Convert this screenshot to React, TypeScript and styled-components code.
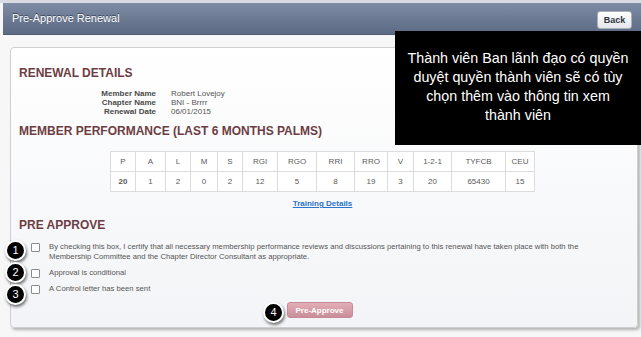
import React from 'react';
import styled, { createGlobalStyle } from 'styled-components';

const GlobalStyle = createGlobalStyle`
  html, body {
    margin: 0;
    padding: 0;
    background: #f7f7f8;
    font-family: 'Liberation Sans', Arial, sans-serif;
  }
`;

const Page = styled.div`
  position: relative;
  width: 641px;
  height: 337px;
  overflow: hidden;
  background: #f7f7f8;
`;

const TopStrip = styled.div`
  height: 3px;
  background: #d9dde3;
`;

const HeaderBar = styled.div`
  height: 31px;
  margin-left: 3px;
  display: flex;
  align-items: center;
  justify-content: space-between;
  padding: 0 9px 0 9px;
  background: linear-gradient(#7f8ca5, #6a7892 55%, #5d6a84);
  border-bottom: 1px solid #4f5b73;
`;

const Title = styled.div`
  color: #fff;
  font-size: 11px;
  text-shadow: 0 -1px 0 #3d475a;
  margin-top: -2px;
`;

const BackButton = styled.button`
  width: 35px;
  height: 18px;
  padding: 0;
  border: 1px solid #a9b0bb;
  border-radius: 3px;
  background: linear-gradient(#ffffff, #e4e6ea);
  color: #2f3440;
  font-family: inherit;
  font-size: 9px;
  font-weight: bold;
  margin-top: 2px;
`;

const Body = styled.div`
  padding: 12px 3px 0 10px;
`;

const Card = styled.div`
  height: 281px;
  box-sizing: border-box;
  border: 1px solid #cfcfd2;
  border-radius: 4px;
  background: linear-gradient(#ffffff, #f3f4f7);
  box-shadow: 2px 2px 3px rgba(0, 0, 0, 0.28);
  padding: 18px 11px 0 8px;
  display: flex;
  flex-direction: column;
`;

const SectionTitle = styled.div<{ $gap?: number }>`
  color: #6d3d44;
  font-size: 12px;
  line-height: 14px;
  font-weight: bold;
  margin-top: ${(p) => p.$gap ?? 0}px;
`;

const DetailGrid = styled.div`
  display: grid;
  grid-template-columns: 70px auto;
  column-gap: 15px;
  margin: 9px 0 0 67px;
  font-size: 8px;
  line-height: 9px;
`;

const DetailLabel = styled.div`
  text-align: right;
  font-weight: bold;
  color: #4a4a4a;
`;

const DetailValue = styled.div`
  color: #555;
`;

const StatsTable = styled.table`
  border-collapse: collapse;
  margin: 13px auto 0;
  table-layout: fixed;
  background: #fff;
`;

const Cell = styled.td<{ $w: number; $bold?: boolean }>`
  width: ${(p) => p.$w}px;
  height: 19px;
  padding: 0;
  border: 1px solid #dcdcdc;
  text-align: center;
  font-family: 'Liberation Sans', Arial, sans-serif;
  font-size: 8px;
  color: #5a5a5a;
  font-weight: ${(p) => (p.$bold ? 'bold' : 'normal')};
`;

const TrainingLink = styled.a`
  align-self: center;
  margin-top: 7px;
  font-size: 8px;
  line-height: 10px;
  font-weight: bold;
  color: #2b74c8;
  text-decoration: underline;
`;

const CheckList = styled.div`
  display: flex;
  flex-direction: column;
  gap: 6px;
  margin-top: 10px;
`;

const CheckRow = styled.label`
  display: flex;
  align-items: flex-start;
  gap: 9px;
  padding-left: 12px;
  font-size: 7.7px;
  line-height: 10px;
  color: #555;
`;

const Box = styled.span`
  flex: none;
  width: 7px;
  height: 7px;
  margin-top: 1px;
  border: 1px solid #8d8d8d;
  border-radius: 1px;
  background: #fff;
`;

const ActionRow = styled.div`
  display: flex;
  justify-content: center;
  margin-top: 8px;
  padding-right: 6px;
`;

const PreApproveButton = styled.button`
  width: 66px;
  height: 16px;
  padding: 0;
  border: 1px solid #c48b96;
  border-radius: 3px;
  background: linear-gradient(#e3aeb7, #c98e99);
  color: #fff;
  font-family: inherit;
  font-size: 8px;
  font-weight: bold;
`;

const Callout = styled.div`
  position: absolute;
  left: 395px;
  top: 31px;
  width: 246px;
  height: 114px;
  box-sizing: border-box;
  padding: 18px 4px 0;
  background: #000;
  color: #fff;
  font-size: 14.3px;
  line-height: 19px;
  text-align: center;
`;

const Marker = styled.div<{ $x: number; $y: number }>`
  position: absolute;
  left: ${(p) => p.$x - 10}px;
  top: ${(p) => p.$y - 10}px;
  width: 17px;
  height: 17px;
  border: 2px solid #fff;
  border-radius: 50%;
  background: #000;
  color: #fff;
  font-size: 11px;
  line-height: 17px;
  text-align: center;
  box-shadow: 1px 2px 3px rgba(0, 0, 0, 0.55);
`;

const columns = [
  { h: 'P', v: '20', w: 24 },
  { h: 'A', v: '1', w: 29 },
  { h: 'L', v: '2', w: 24 },
  { h: 'M', v: '0', w: 26 },
  { h: 'S', v: '2', w: 24 },
  { h: 'RGI', v: '12', w: 34 },
  { h: 'RGO', v: '5', w: 38 },
  { h: 'RRI', v: '8', w: 37 },
  { h: 'RRO', v: '19', w: 32 },
  { h: 'V', v: '3', w: 25 },
  { h: '1-2-1', v: '20', w: 37 },
  { h: 'TYFCB', v: '65430', w: 53 },
  { h: 'CEU', v: '15', w: 28 },
];

const details = [
  ['Member Name', 'Robert Lovejoy'],
  ['Chapter Name', 'BNI - Brrrr'],
  ['Renewal Date', '06/01/2015'],
];

const markers = [
  { n: 1, x: 15, y: 250 },
  { n: 2, x: 15, y: 272 },
  { n: 3, x: 15, y: 294 },
  { n: 4, x: 273, y: 312 },
];

export default function App() {
  return (
    <Page>
      <GlobalStyle />
      <TopStrip />
      <HeaderBar>
        <Title>Pre-Approve Renewal</Title>
        <BackButton>Back</BackButton>
      </HeaderBar>
      <Body>
        <Card>
          <SectionTitle>RENEWAL DETAILS</SectionTitle>
          <DetailGrid>
            {details.map(([label, value]) => (
              <React.Fragment key={label}>
                <DetailLabel>{label}</DetailLabel>
                <DetailValue>{value}</DetailValue>
              </React.Fragment>
            ))}
          </DetailGrid>
          <SectionTitle $gap={8}>MEMBER PERFORMANCE (LAST 6 MONTHS PALMS)</SectionTitle>
          <StatsTable>
            <tbody>
              <tr>
                {columns.map((c) => (
                  <Cell key={c.h} $w={c.w}>
                    {c.h}
                  </Cell>
                ))}
              </tr>
              <tr>
                {columns.map((c, i) => (
                  <Cell key={c.h} $w={c.w} $bold={i === 0}>
                    {c.v}
                  </Cell>
                ))}
              </tr>
            </tbody>
          </StatsTable>
          <TrainingLink href="#">Training Details</TrainingLink>
          <SectionTitle $gap={9}>PRE APPROVE</SectionTitle>
          <CheckList>
            <CheckRow>
              <Box />
              <span>
                By checking this box, I certify that all necessary membership performance reviews and
                discussions pertaining to this renewal have taken place with both the
                <br />
                Membership Committee and the Chapter Director Consultant as appropriate.
              </span>
            </CheckRow>
            <CheckRow>
              <Box />
              <span>Approval is conditional</span>
            </CheckRow>
            <CheckRow>
              <Box />
              <span>A Control letter has been sent</span>
            </CheckRow>
          </CheckList>
          <ActionRow>
            <PreApproveButton>Pre-Approve</PreApproveButton>
          </ActionRow>
        </Card>
      </Body>
      <Callout>
        Thành viên Ban lãnh đạo có quyền
        <br />
        duyệt quyền thành viên sẽ có tùy
        <br />
        chọn thêm vào thông tin xem
        <br />
        thành viên
      </Callout>
      {markers.map((m) => (
        <Marker key={m.n} $x={m.x} $y={m.y}>
          {m.n}
        </Marker>
      ))}
    </Page>
  );
}
